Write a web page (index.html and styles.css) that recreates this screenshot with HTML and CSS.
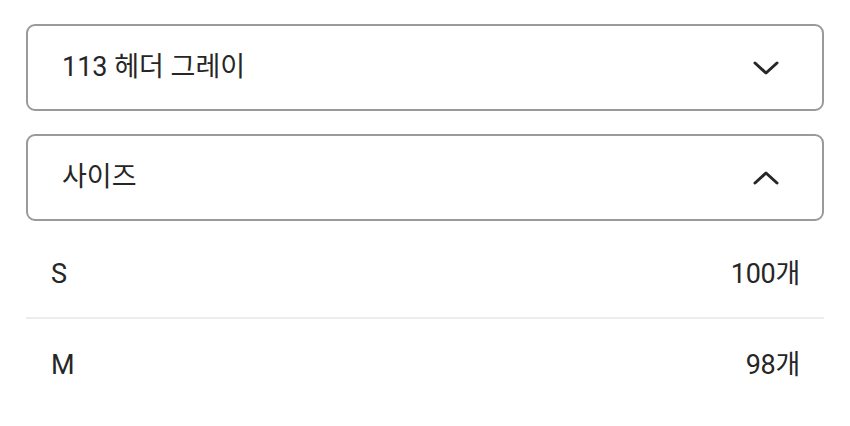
FILE: index.html
```html
<!DOCTYPE html>
<html lang="ko">
  <head>
    <meta charset="UTF-8" />
    <meta name="viewport" content="width=device-width, initial-scale=1.0" />
    <title>옵션 선택</title>
    <link rel="stylesheet" href="styles.css">
  </head>
  <body>
    <div class="options">
      <!-- 색상 선택 -->
      <div class="select">
        <span class="select-label">113 헤더 그레이</span>
        <svg class="chevron" width="26" height="14" viewBox="0 0 26 14">
          <polyline points="2,2 13,12 24,2" />
        </svg>
      </div>

      <!-- 사이즈 선택 (열림) -->
      <div class="select">
        <span class="select-label">사이즈</span>
        <svg class="chevron" width="26" height="14" viewBox="0 0 26 14">
          <polyline points="2,12 13,2 24,12" />
        </svg>
      </div>

      <ul class="size-list">
        <li class="size-item">
          <span class="size-name">S</span>
          <span class="size-stock">100개</span>
        </li>
        <li class="size-item">
          <span class="size-name">M</span>
          <span class="size-stock">98개</span>
        </li>
      </ul>
    </div>
  </body>
</html>
```

FILE: styles.css
```css
body {
  margin: 0;
  background-color: #fff;
  font-family: Roboto, "Noto Sans CJK KR", sans-serif;
  color: #262626;
}

.options {
  padding: 24px 26px 0 26px;
  display: flex;
  flex-direction: column;
}

.select {
  display: flex;
  justify-content: space-between;
  align-items: center;
  height: 83px;
  padding: 0 43px 0 34px;
  border: 2px solid #9a9a9a;
  border-radius: 9px;
  margin-bottom: 23px;
}

.select-label {
  font-size: 27px;
  line-height: 30px;
  margin-top: -2px;
}

.chevron polyline {
  fill: none;
  stroke: #262626;
  stroke-width: 3;
  stroke-linecap: round;
  stroke-linejoin: round;
}

.size-list {
  list-style: none;
  margin: -23px 0 0 0;
  padding: 0;
}

.size-item {
  display: flex;
  justify-content: space-between;
  align-items: center;
  height: 86px;
  padding: 10px 24px 0 25px;
  font-size: 27px;
  line-height: 30px;
}

.size-item + .size-item {
  border-top: 2px solid #ededed;
  height: 92px;
  padding-top: 0;
}

.size-stock {
  letter-spacing: -0.3px;
}
```
